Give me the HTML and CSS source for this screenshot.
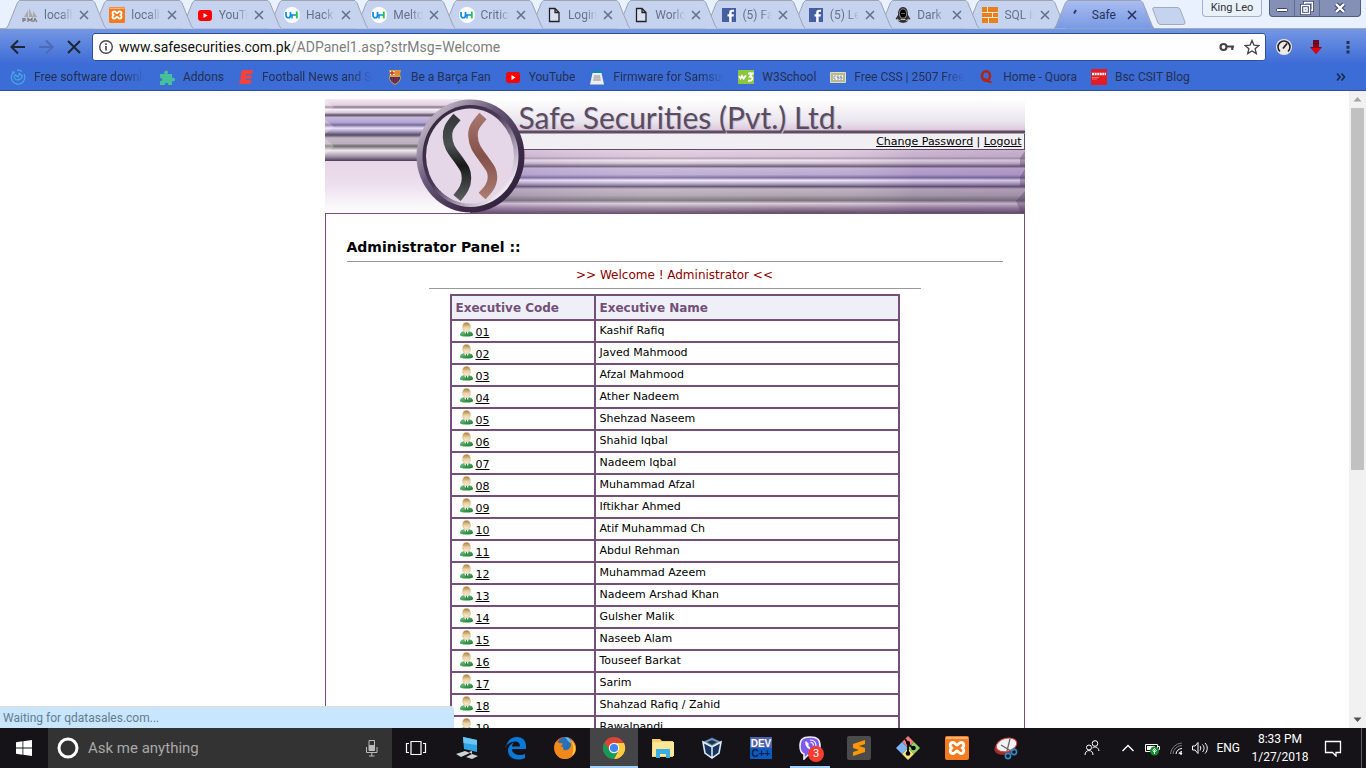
FILE: index.html
```html
<!DOCTYPE html>
<html lang="en">
<head>
<meta charset="utf-8">
<title>Safe Securities (Pvt.) Ltd.</title>
<link rel="stylesheet" href="styles.css">
</head>
<body>
<svg class="defs" aria-hidden="true">
  <defs>
    <linearGradient id="gTab" x1="0" y1="0" x2="0" y2="1"><stop offset="0" stop-color="#a9bdf0"/><stop offset="1" stop-color="#7899e3"/></linearGradient>
    <linearGradient id="gHair" x1="0" y1="0" x2="0" y2="1"><stop offset="0" stop-color="#a57b3c"/><stop offset=".5" stop-color="#e8cfa0"/><stop offset="1" stop-color="#fbeed6"/></linearGradient>
    <linearGradient id="gCoat" x1="0" y1="0" x2="1" y2="1"><stop offset="0" stop-color="#7cc487"/><stop offset="1" stop-color="#117a2c"/></linearGradient>
  </defs>
  <symbol id="shape" viewBox="0 0 100 29" preserveAspectRatio="none"><path d="M0 28.5 2 26 11.500 2.500 13.500.5H86.500L88.500 2.500 98 26 100 28.500" vector-effect="non-scaling-stroke"/></symbol>
  <symbol id="close" viewBox="0 0 10 10"><path d="M1 1 9 9M9 1 1 9" fill="none" stroke="currentColor" stroke-width="1.600"/></symbol>
  <symbol id="yt" viewBox="0 0 16 16"><rect x="1" y="3" width="14" height="11" rx="3" fill="#f00"/><path d="M6.500 6v5l4-2.500z" fill="#fff"/></symbol>
  <symbol id="uh" viewBox="0 0 16 16"><circle cx="8" cy="8" r="8" fill="#fff"/><path d="M2 5v3.500a2 2 0 0 0 4.500 0V5" fill="none" stroke="#0a8ae6" stroke-width="1.700"/><path d="M8 7.500V11.500M6.500 8h6" fill="none" stroke="#0a8ae6" stroke-width="1.500"/><path d="M12.800 4.500V11.500" stroke="#1ecb3a" stroke-width="1.800"/></symbol>
  <symbol id="doc" viewBox="0 0 16 16"><path d="M3.500 1.500h5.500l4 4v9h-9.500zM9 1.500v4h4" fill="#f4f6fb" fill-opacity=".4" stroke="#222" stroke-width="1.300"/></symbol>
  <symbol id="fb" viewBox="0 0 16 16"><rect x="1" y="1" width="14" height="14" fill="#4460a0"/><path d="M10.600 15V9.500h2.200V7.300h-2.200V6c0-.8.300-1.200 1.200-1.200h1.200V2.700h-2C9 2.700 8.200 4 8.200 5.700v1.600H6.500v2.200h1.700V15z" fill="#fff"/></symbol>
  <symbol id="xampp" viewBox="0 0 24 24"><rect width="24" height="24" rx="2" fill="#f47b20"/><path d="M1 1h22v2H1z" fill="#fbb377"/><path d="M8 6.500C4.500 6.500 4.500 11 7 12 4.500 13 4.500 17.500 8 17.500c2 0 2.500-2.500 4-2.500s2 2.500 4 2.500c3.500 0 3.500-4.500 1-5.500 2.500-1 2.500-5.500-1-5.500-2 0-2.500 2.500-4 2.500s-2-2.500-4-2.500z" fill="none" stroke="#fff" stroke-width="2.800" stroke-linejoin="round"/></symbol>
  <symbol id="user" viewBox="0 0 15 16"><path d="M1 12.500C1.500 9.500 4 9 7.500 9s6 .8 6.500 3.500c.2 1.500-1.500 2-6.500 2s-6.700-.5-6.500-2z" fill="url(#gCoat)"/><path d="M5 9.500 7.500 13 10 9.500 7.500 8.500z" fill="#fff"/><path d="m7 10-.7 3.500h2L8 10z" fill="#2a8c3e"/><ellipse cx="7.500" cy="5" rx="3.800" ry="4.400" fill="url(#gHair)" stroke="#c9a468" stroke-width=".5"/></symbol>
</svg>

<header class="browser">
  <div class="strip">
    <nav class="tabs" aria-label="Tabs">
      <div class="tab" style="--i:1"><svg class="bg"><use href="#shape"/></svg><svg class="ic" viewBox="0 0 16 16"><path d="M2 10 6 3v7zM7 10V1l4 9zM11 10V4l4 6z" fill="#a9a9a9"/><path d="M1 15v-3.500h2v2H1M6 15v-3.500l2 2 2-2V15M11.500 15l1.500-3.500 2 3.500" fill="none" stroke="#777" stroke-width="1.200"/></svg><span class="title">localhost</span><button aria-label="Close tab"><svg><use href="#close"/></svg></button></div>
      <div class="tab" style="--i:2"><svg class="bg"><use href="#shape"/></svg><svg class="ic"><use href="#xampp"/></svg><span class="title">localhost</span><button aria-label="Close tab"><svg><use href="#close"/></svg></button></div>
      <div class="tab" style="--i:3"><svg class="bg"><use href="#shape"/></svg><svg class="ic"><use href="#yt"/></svg><span class="title">YouTube</span><button aria-label="Close tab"><svg><use href="#close"/></svg></button></div>
      <div class="tab" style="--i:4"><svg class="bg"><use href="#shape"/></svg><svg class="ic"><use href="#uh"/></svg><span class="title">Hack</span><button aria-label="Close tab"><svg><use href="#close"/></svg></button></div>
      <div class="tab" style="--i:5"><svg class="bg"><use href="#shape"/></svg><svg class="ic"><use href="#uh"/></svg><span class="title">Meltdown</span><button aria-label="Close tab"><svg><use href="#close"/></svg></button></div>
      <div class="tab" style="--i:6"><svg class="bg"><use href="#shape"/></svg><svg class="ic"><use href="#uh"/></svg><span class="title">Critical</span><button aria-label="Close tab"><svg><use href="#close"/></svg></button></div>
      <div class="tab" style="--i:7"><svg class="bg"><use href="#shape"/></svg><svg class="ic"><use href="#doc"/></svg><span class="title">Login</span><button aria-label="Close tab"><svg><use href="#close"/></svg></button></div>
      <div class="tab" style="--i:8"><svg class="bg"><use href="#shape"/></svg><svg class="ic"><use href="#doc"/></svg><span class="title">World</span><button aria-label="Close tab"><svg><use href="#close"/></svg></button></div>
      <div class="tab" style="--i:9"><svg class="bg"><use href="#shape"/></svg><svg class="ic"><use href="#fb"/></svg><span class="title">(5) Facebook</span><button aria-label="Close tab"><svg><use href="#close"/></svg></button></div>
      <div class="tab" style="--i:10"><svg class="bg"><use href="#shape"/></svg><svg class="ic"><use href="#fb"/></svg><span class="title">(5) Leo</span><button aria-label="Close tab"><svg><use href="#close"/></svg></button></div>
      <div class="tab" style="--i:11"><svg class="bg"><use href="#shape"/></svg><svg class="ic" viewBox="0 0 16 16"><path d="M8 0C4 0 3 4 3 8l-2.500 4L3 13l1 2 4 1 4-1 1-2 2.500-1L13 8c0-4-1-8-5-8z" fill="#333"/><path d="M4.500 8C4 4 6 2 8 2s4 2 3.500 6L10 11H6z" fill="#000" stroke="#aaa" stroke-width=".8"/><path d="M5.500 12.500h5M6.500 6.500h1M8.500 6.500h1M2 12l3 2M14 12l-3 2" stroke="#bbb" stroke-width="1"/></svg><span class="title">Dark</span><button aria-label="Close tab"><svg><use href="#close"/></svg></button></div>
      <div class="tab" style="--i:12"><svg class="bg"><use href="#shape"/></svg><svg class="ic" viewBox="0 0 16 16"><path d="M0 0h16v16H0z" fill="#e67f1c"/><path d="M0 5.500h16M0 10.500h16M5.500 0v5.500M10.500 5.500v5M6.500 10.500V16" stroke="#f8e6cf" stroke-width="1"/></svg><span class="title">SQL in</span><button aria-label="Close tab"><svg><use href="#close"/></svg></button></div>
      <div class="tab active" style="--i:0"><svg class="bg"><use href="#shape"/></svg><svg class="ic" viewBox="0 0 16 16"><path d="M4 6.500 6 3" stroke="#233a75" stroke-width="2"/></svg><span class="title">Safe</span><button aria-label="Close tab"><svg><use href="#close"/></svg></button></div>
    </nav>
    <button class="newtab" aria-label="New tab"><svg viewBox="0 0 34 18"><path d="M2 .5H25Q27 .5 28 2L33 15Q33.500 17.500 31 17.500H9Q7 17.500 6 16L1 3Q0 .5 2 .5z" fill="#c6d3ef" stroke="#a3a9b8"/></svg></button>
    <div class="winctl">
      <button class="profile">King Leo</button>
      <div class="wbtns">
        <button aria-label="Minimize"><svg viewBox="0 0 16 14"><rect x="2.500" y="7.500" width="11" height="3" rx="1" fill="#fff" stroke="#3a4468"/></svg></button>
        <button aria-label="Restore"><svg viewBox="0 0 16 14"><path d="M5.500 1.500h8v8h-8z" fill="none" stroke="#3a4468" stroke-width="3"/><path d="M5.500 1.500h8v8h-8z" fill="#8490b5" stroke="#fff" stroke-width="1.300"/><path d="M2.500 4.500h8v8h-8z" fill="#8490b5" stroke="#3a4468" stroke-width="3"/><path d="M2.500 4.500h8v8h-8zM5 7h3v3H5z" fill="none" stroke="#fff" stroke-width="1.300"/></svg></button>
        <button class="wide" aria-label="Close"><svg viewBox="0 0 16 14"><path d="m4 3 8 8M12 3l-8 8" stroke="#3a4468" stroke-width="4.500"/><path d="m4 3 8 8M12 3l-8 8" stroke="#fff" stroke-width="2.400"/></svg></button>
      </div>
    </div>
  </div>

  <div class="toolbar">
    <div class="history">
      <button aria-label="Back"><svg viewBox="0 0 16 16"><path d="M15 8H2M8 1.500 1.500 8 8 14.500" fill="none" stroke="#1e2536" stroke-width="2"/></svg></button>
      <button aria-label="Forward"><svg viewBox="0 0 16 16"><path d="M1 8h13M8 1.500 14.500 8 8 14.500" fill="none" stroke="#4c6ab8" stroke-width="2"/></svg></button>
      <button aria-label="Stop"><svg viewBox="0 0 16 16"><path d="m2 2 12 12M14 2 2 14" stroke="#1e2536" stroke-width="2"/></svg></button>
    </div>
    <label class="omnibox">
      <svg viewBox="0 0 16 16"><circle cx="8" cy="8" r="6.300" fill="none" stroke="#4a4a4a" stroke-width="1.400"/><path d="M8 7v4.500M8 4.200v1.700" stroke="#4a4a4a" stroke-width="1.700"/></svg>
      <input class="host" type="text" aria-label="Address" value="www.safesecurities.com.pk"><span class="path">/ADPanel1.asp?strMsg=Welcome</span>
      <svg viewBox="0 0 16 16"><circle cx="4.500" cy="8" r="3" fill="none" stroke="#444" stroke-width="2.200"/><path d="M7.500 7.500H15M13.300 7.500V11" stroke="#444" stroke-width="2.200" fill="none"/></svg>
      <svg class="star" viewBox="0 0 16 16"><path d="m8 1.500 1.900 4.600 5 .4-3.800 3.200 1.200 4.900L8 12l-4.300 2.600 1.200-4.900L1.100 6.500l5-.4z" fill="none" stroke="#444" stroke-width="1.300"/></svg>
    </label>
    <div class="exts">
      <button aria-label="Speed"><svg viewBox="0 0 16 16"><circle cx="8" cy="8" r="8" fill="#eceae8"/><path d="M4 12.500A6 6 0 1 1 12 12.500" fill="none" stroke="#222" stroke-width="1.600"/><path d="m7 9.500 4-5" stroke="#222" stroke-width="1.800"/></svg></button>
      <button aria-label="Download"><svg viewBox="0 0 16 16"><path d="M5 1h6v7h3l-6 7-6-7h3z" fill="#8d0414"/><path d="M3 9h10l-5 6z" fill="#e00010"/><path d="M5 2h6M5 4.500h6" stroke="#3c1030"/></svg></button>
      <button aria-label="Menu"><svg viewBox="0 0 16 16"><path d="M6.500 2h3v3h-3zM6.500 6.800h3v3h-3zM6.500 11.600h3v3h-3z" fill="#26304e"/></svg></button>
    </div>
  </div>

  <nav class="bookmarks" aria-label="Bookmarks">
    <a href="#"><svg viewBox="0 0 16 16"><path d="M4.500 2.500A6.800 6.800 0 1 0 14 5M7 1.200a7 7 0 0 1 5 1.300M4 7c.5 5 6 5.500 8.500 0l-3-2.500L8 8 5.500 6zM2 3h2v2" fill="none" stroke="#4aa7e4" stroke-width="1.200"/></svg><span>Free software downloads</span></a>
    <a href="#"><svg viewBox="0 0 16 16"><path d="M1 5h4.500C4 1.500 9 0 9 3c0 1-.5 1.300-.5 2H13v4c1-.5 3-.5 3 1.500S14 12.500 13 12v4H9c1-3-3.500-3-3 0H1v-4c3 .5 3-3.500 0-3z" fill="#45c09b"/></svg><span>Addons</span></a>
    <a href="#"><svg viewBox="0 0 16 16"><path d="M4 1h11l-1 4H3zM3 4h5v8H2.500zM3 6.300h11l-.7 3.400H2.300zM2 11h11.500l-1 4H1z" fill="#f0433c"/></svg><span>Football News and Scores</span></a>
    <a href="#"><svg viewBox="0 0 16 16"><path d="M2 1h12l-1 4 1 4c-1 4-3 5-6 7-3-2-5-3-6-7l1-4z" fill="#d9a32c"/><path d="M3 2h4.500v4H3z" fill="#fff"/><path d="M3 4h4.500M5 2v4" stroke="#d22" stroke-width="1.400"/><path d="M8.500 2H13v4H8.500z" fill="#e8843a"/><path d="M3 8h10v2l-2 3-3 2-3-2-2-3z" fill="#233a86"/><path d="M5.500 8v5M8 8v6M10.500 8v5" stroke="#a8203c" stroke-width="1.300"/></svg><span>Be a Barça Fan</span></a>
    <a href="#"><svg><use href="#yt"/></svg><span>YouTube</span></a>
    <a href="#"><svg viewBox="0 0 16 16"><path d="M0 3c3-3.500 13-3.500 16 0l-2.500 1.500h-11z" fill="#1b7fc4"/><path d="M3.500 4h9L15 15.500H1z" fill="#eee"/><path d="M5 6h6l1 6H4z" fill="#bcbcbc"/></svg><span>Firmware for Samsung</span></a>
    <a href="#"><svg viewBox="0 0 16 16"><path d="M0 1h16v14H0z" fill="#8cc63f"/><path d="m1 7 1.500 2.500L4 7l1.500 2.500L8 6.500M10 4.500h4.500L12 7.500c4 0 3 5.500-2 4" fill="none" stroke="#fff" stroke-width="1.900"/></svg><span>W3School</span></a>
    <a href="#"><svg viewBox="0 0 16 16"><path d="M.5 3.500h15v10H.5z" fill="#b9b98c" stroke="#dcdcc4"/><path d="M3 6h10v5H3z" fill="#f5f5ec"/><path d="M6 7H4v3h2M9 7H7.300v1.500H9V10H7M12 7h-1.700v1.500H12V10h-2" fill="none" stroke="#7a86a8" stroke-width=".8"/></svg><span>Free CSS | 2507 Free Website</span></a>
    <a href="#"><svg viewBox="0 0 16 16"><ellipse cx="7" cy="7" rx="4" ry="4.800" fill="none" stroke="#b02519" stroke-width="2.600"/><path d="M5 10c3-1 3 4 7.500 3" fill="none" stroke="#b02519" stroke-width="2"/></svg><span>Home - Quora</span></a>
    <a href="#"><svg viewBox="0 0 16 16"><path d="M0 0h16v16H0z" fill="#e31b23"/><path d="M1 5h14" stroke="#fff" stroke-width="2.400" stroke-dasharray="2 .6"/><path d="M1 8.500h7M1 10h5" stroke="#f29094" stroke-width=".7"/></svg><span>Bsc CSIT Blog</span></a>
    <button class="more" aria-label="More bookmarks"><svg viewBox="0 0 10 10"><path d="m1 1.500 3 3.500-3 3.500M5.500 1.500l3 3.500-3 3.500" fill="none" stroke="#1c2848" stroke-width="1.600"/></svg></button>
  </nav>
</header>

<div class="viewport">
  <main class="page">
    <div class="banner">
      <svg class="art" viewBox="0 0 700 114" preserveAspectRatio="none" aria-hidden="true">
        <defs>
          <linearGradient id="left" x1="0" y1="0" x2="0" y2="1">
            <stop offset="0" stop-color="#f3ebf3"/><stop offset=".1" stop-color="#e4cfe2"/><stop offset=".13" stop-color="#87798a"/><stop offset=".17" stop-color="#f6f0f6"/><stop offset=".22" stop-color="#d8c9dc"/><stop offset=".26" stop-color="#5e5264"/><stop offset=".3" stop-color="#c9b9dc"/><stop offset=".38" stop-color="#b3a3d2"/><stop offset=".42" stop-color="#75699a"/><stop offset=".47" stop-color="#eae4f6"/><stop offset=".53" stop-color="#a194c0"/><stop offset=".58" stop-color="#564a5e"/><stop offset=".63" stop-color="#c4b9c8"/><stop offset=".72" stop-color="#b9b1bb"/><stop offset=".76" stop-color="#6b6a6b"/><stop offset=".83" stop-color="#efe8ef"/><stop offset=".93" stop-color="#a090a6"/><stop offset="1" stop-color="#4a3c52"/>
          </linearGradient>
          <linearGradient id="right" x1="0" y1="0" x2="0" y2="1">
            <stop offset="0" stop-color="#e2cbdf"/><stop offset=".11" stop-color="#d4bfd4"/><stop offset=".13" stop-color="#a592a6"/><stop offset=".16" stop-color="#eee6f0"/><stop offset=".21" stop-color="#cdbdd0"/><stop offset=".26" stop-color="#66546c"/><stop offset=".29" stop-color="#c3b2d6"/><stop offset=".39" stop-color="#b7a6d0"/><stop offset=".44" stop-color="#75649c"/><stop offset=".48" stop-color="#f0ecf8"/><stop offset=".54" stop-color="#a698be"/><stop offset=".58" stop-color="#5b4a66"/><stop offset=".62" stop-color="#bdb0c0"/><stop offset=".72" stop-color="#aaa0ac"/><stop offset=".8" stop-color="#726a74"/><stop offset=".85" stop-color="#d8cad8"/><stop offset=".92" stop-color="#947e98"/><stop offset="1" stop-color="#594460"/>
          </linearGradient>
          <linearGradient id="sheen"><stop offset="0" stop-color="#8c6cb0" stop-opacity=".25"/><stop offset=".35" stop-color="#fff" stop-opacity=".12"/><stop offset=".6" stop-color="#fff" stop-opacity=".05"/><stop offset=".8" stop-color="#80609a" stop-opacity=".18"/><stop offset="1" stop-color="#80609a" stop-opacity=".25"/></linearGradient>
          <linearGradient id="head" x1="0" y1="0" x2="0" y2="1"><stop offset="0" stop-color="#fff"/><stop offset=".7" stop-color="#e9e5ee"/><stop offset="1" stop-color="#ddc6da"/></linearGradient>
          <linearGradient id="foot" x1="0" y1="0" x2="0" y2="1"><stop offset="0" stop-color="#e8d6e8"/><stop offset=".45" stop-color="#ecdfee"/><stop offset="1" stop-color="#fff"/></linearGradient>
          <linearGradient id="ring" x1="0" y1="0" x2="1" y2="1"><stop offset="0" stop-color="#8c8090"/><stop offset=".16" stop-color="#b9adbd"/><stop offset=".4" stop-color="#6a587a"/><stop offset=".7" stop-color="#3c2a48"/><stop offset="1" stop-color="#2c1c36"/></linearGradient>
          <linearGradient id="rim" x1="0" y1="0" x2="1" y2="1"><stop offset="0" stop-color="#2b2034"/><stop offset=".45" stop-color="#4a3a58"/><stop offset=".7" stop-color="#b4a8bc"/><stop offset=".85" stop-color="#f1ecf4"/><stop offset="1" stop-color="#5e4e6c"/></linearGradient>
          <linearGradient id="ink" x1="0" y1="0" x2="0" y2="1"><stop offset="0" stop-color="#343838"/><stop offset=".35" stop-color="#4a5050"/><stop offset=".6" stop-color="#181a1a"/><stop offset="1" stop-color="#555c5b"/></linearGradient>
          <linearGradient id="rust" x1="0" y1="0" x2="0" y2="1"><stop offset="0" stop-color="#a5766e"/><stop offset=".5" stop-color="#84504a"/><stop offset="1" stop-color="#a87a70"/></linearGradient>
        </defs>
        <path d="M0 62h200v52H0z" fill="url(#foot)"/>
        <path d="M0 0h145v62H0z" fill="url(#left)"/>
        <path d="M0 1 9 8 0 14M0 20l9 8-9 7M0 39l9 8-9 10" fill="#fff" opacity=".25"/>
        <path d="M145 0h555v32H145z" fill="url(#head)"/>
        <path d="M145 34h555v17H145z" fill="#f2eff4"/>
        <path d="M145 31.500h555v3H145z" fill="#5d4d63"/>
        <path d="M145 51h555v63H145z" fill="url(#right)"/>
        <path d="M145 51h555v63H145z" fill="url(#sheen)"/>
        <path d="M145 50h555v1H145z" fill="#5d4d63"/>
        <path d="m700 52-5 7v8h5M700 70l-5 8v9h5M700 92l-9 10 5 12h4" fill="#4e3a58" opacity=".35"/>
        <path d="M699.500 35v15" stroke="#5d4d63"/>
        <ellipse cx="145.500" cy="57" rx="54" ry="56.500" fill="url(#ring)"/>
        <ellipse cx="145.500" cy="57" rx="48" ry="51" fill="url(#rim)"/>
        <ellipse cx="145" cy="57" rx="44" ry="47.500" fill="#e6d7e8"/>
        <path d="M132 18C124 27 122 31 122.500 38 123 48 128 53 133 60 140 70 141.500 72 141.500 79 141.500 87 138 92 132 99" fill="none" stroke="url(#ink)" stroke-width="9.500"/>
        <path d="M158 17C150 26 147.500 30 148 37 148.500 47 153 52 158 59 165 69 167.500 71 167.500 78 167.500 86 163 91 157 97" fill="none" stroke="url(#rust)" stroke-width="9.500"/>
      </svg>
      <p class="brand">Safe Securities (Pvt.) Ltd.</p>
      <nav class="account"><a href="#">Change Password</a> | <a href="#">Logout</a></nav>
    </div>
    <section class="panel">
      <h1>Administrator Panel ::</h1>
      <hr>
      <p class="welcome">&gt;&gt; Welcome ! Administrator &lt;&lt;</p>
      <hr class="short">
      <table>
        <thead><tr><th scope="col" class="code">Executive Code</th><th scope="col">Executive Name</th></tr></thead>
        <tbody>
          <tr><td><div class="exec"><svg><use href="#user"/></svg><a href="#">01</a></div></td><td>Kashif Rafiq</td></tr>
          <tr><td><div class="exec"><svg><use href="#user"/></svg><a href="#">02</a></div></td><td>Javed Mahmood</td></tr>
          <tr><td><div class="exec"><svg><use href="#user"/></svg><a href="#">03</a></div></td><td>Afzal Mahmood</td></tr>
          <tr><td><div class="exec"><svg><use href="#user"/></svg><a href="#">04</a></div></td><td>Ather Nadeem</td></tr>
          <tr><td><div class="exec"><svg><use href="#user"/></svg><a href="#">05</a></div></td><td>Shehzad Naseem</td></tr>
          <tr><td><div class="exec"><svg><use href="#user"/></svg><a href="#">06</a></div></td><td>Shahid Iqbal</td></tr>
          <tr><td><div class="exec"><svg><use href="#user"/></svg><a href="#">07</a></div></td><td>Nadeem Iqbal</td></tr>
          <tr><td><div class="exec"><svg><use href="#user"/></svg><a href="#">08</a></div></td><td>Muhammad Afzal</td></tr>
          <tr><td><div class="exec"><svg><use href="#user"/></svg><a href="#">09</a></div></td><td>Iftikhar Ahmed</td></tr>
          <tr><td><div class="exec"><svg><use href="#user"/></svg><a href="#">10</a></div></td><td>Atif Muhammad Ch</td></tr>
          <tr><td><div class="exec"><svg><use href="#user"/></svg><a href="#">11</a></div></td><td>Abdul Rehman</td></tr>
          <tr><td><div class="exec"><svg><use href="#user"/></svg><a href="#">12</a></div></td><td>Muhammad Azeem</td></tr>
          <tr><td><div class="exec"><svg><use href="#user"/></svg><a href="#">13</a></div></td><td>Nadeem Arshad Khan</td></tr>
          <tr><td><div class="exec"><svg><use href="#user"/></svg><a href="#">14</a></div></td><td>Gulsher Malik</td></tr>
          <tr><td><div class="exec"><svg><use href="#user"/></svg><a href="#">15</a></div></td><td>Naseeb Alam</td></tr>
          <tr><td><div class="exec"><svg><use href="#user"/></svg><a href="#">16</a></div></td><td>Touseef Barkat</td></tr>
          <tr><td><div class="exec"><svg><use href="#user"/></svg><a href="#">17</a></div></td><td>Sarim</td></tr>
          <tr><td><div class="exec"><svg><use href="#user"/></svg><a href="#">18</a></div></td><td>Shahzad Rafiq / Zahid</td></tr>
          <tr><td><div class="exec"><svg><use href="#user"/></svg><a href="#">19</a></div></td><td>Rawalpandi</td></tr>
        </tbody>
      </table>
    </section>
  </main>
  <div class="scroll" aria-hidden="true">
    <svg viewBox="0 0 17 17"><path d="m4.500 10.500 4-4.500 4 4.500z" fill="#a3a3a3"/></svg>
    <div class="track"><div class="thumb" style="height:60%"></div></div>
    <svg viewBox="0 0 17 17"><path d="m4.500 6.500 4 4.500 4-4.500z" fill="#505050"/></svg>
  </div>
  <div class="status">Waiting for qdatasales.com...</div>
</div>

<footer class="taskbar">
  <button class="start" aria-label="Start"><svg viewBox="0 0 16 16"><path d="M0 2.200 6.500 1.300v6.200H0zM7.300 1.200 16 0v7.500H7.300zM0 8.400h6.500v6.300L0 13.800zM7.300 8.400H16V16l-8.700-1.200z" fill="#fff"/></svg></button>
  <label class="search">
    <svg class="ring" viewBox="0 0 22 22"><circle cx="11" cy="11" r="9" fill="none" stroke="#fff" stroke-width="3"/></svg>
    <input type="text" placeholder="Ask me anything" aria-label="Ask me anything">
    <svg class="mic" viewBox="0 0 16 18"><path d="M5 1.500h5.500v10H5z" fill="none" stroke="#bbb"/><path d="M5 6h5.500v5.500H5z" fill="#bbb"/><path d="M2.500 8v5.500h10.500V8M7.800 14v3M5 17h5.500" fill="none" stroke="#bbb"/></svg>
  </label>
  <nav class="apps" aria-label="Applications">
    <button class="views" aria-label="Task view"><svg viewBox="0 0 24 24"><path d="M7 5.500h10v13H7zM5 7.500H2.500v9H5M19 7.500h2.500v9H19" fill="none" stroke="#fff" stroke-width="1.200"/></svg></button>
    <button aria-label="Remote desktop"><svg viewBox="0 0 24 24"><path d="m8 1 14 3v12L9 13z" fill="#2fa3e6"/><path d="m8 1 14 3v5L8.500 7z" fill="#6ac6f5"/><path d="m1 18 9-3 5 2-9 4zM11 21l6-3 6 2-6 3zM14 16l3-1v3z" fill="#cdd3d8"/></svg></button>
    <button aria-label="Edge"><svg viewBox="0 0 24 24"><path d="M2 11C3 5 7 1 13 1c6 0 9 4 9 9v3H8c0 4 4 6 8 6 2 0 4-.5 5-1v4c-2 1-4 1.500-7 1.500-6 0-10-4-10-9 0-4 3-7 6-8-1 1-2 2.500-2 4h8c0-3-1.500-5-5-5-4 0-7 2-10 5.500z" fill="#0a78d7"/></svg></button>
    <button aria-label="Firefox"><svg viewBox="0 0 24 24"><circle cx="12" cy="12" r="11" fill="#ee6a16"/><circle cx="12.500" cy="9" r="8" fill="#2c6fb5"/><path d="M12 1c5 1 7 4 7 7l-3-2z" fill="#6cc0e8"/><path d="M2 7c2-2 3-1 4 0l4 .5-2 3c2 0 3 1 2 3 3 2 7 0 8-4 0-3-1-5 0-6 4 3 6 8 4 13-2 4-6 6.500-10 6.500C5 23 0 17 2 7z" fill="#f08a1b"/><path d="M18 4c5 5 6 12 1 16 2-5 2-10-1-16z" fill="#fdd24c"/></svg></button>
    <button class="on" aria-label="Chrome"><svg viewBox="0 0 24 24"><circle cx="12" cy="12" r="11" fill="#db4437"/><path d="M12 7H22A11 11 0 0 1 12 23L16.500 14.500z" fill="#ffcd40"/><path d="M2.500 6.500A11 11 0 0 0 12 23l4.500-8.500H7.500z" fill="#0f9d58"/><circle cx="12" cy="12" r="5.200" fill="#fff"/><circle cx="12" cy="12" r="4.100" fill="#4285f4"/></svg></button>
    <button aria-label="File Explorer"><svg viewBox="0 0 24 24"><path d="M1 3h8l2 2h11v16H1z" fill="#f5d069"/><path d="M2 6h21v14H1z" fill="#fde59a"/><path d="M5 13h14v9h-4v-4H9v4H5z" fill="#39aee0"/></svg></button>
    <button aria-label="VirtualBox"><svg viewBox="0 0 24 24"><path d="m12 1 10 5-2 12-8 5-8-5L2 6z" fill="#15355e"/><path d="m12 2 9 4-9 5-9-5z" fill="#7f9ab8"/><path d="m12 4 5 2-5 3-5-3z" fill="#1a3558"/><path d="M3 6l9 5 9-5-2 11-7 5-7-5zM12 11v11" fill="none" stroke="#e4ecf3" stroke-width="1.500"/></svg></button>
    <button aria-label="Dev-C++"><svg viewBox="0 0 24 24"><path d="M1 1h22v11H1z" fill="#5062ac"/><path d="M1 12h22v11H1z" fill="#0a5cc0"/><text x="12" y="11" class="dev" fill="#fff">DEV</text><text x="12" y="21" class="dev" fill="#0b1d4a">C++</text></svg></button>
    <button class="open" aria-label="Viber"><svg viewBox="0 0 24 24"><path d="M12 1C4 1 2 4 2 10c0 5 1 7 4 8v5l4-4c9 1 12-2 12-9 0-6-2-9-10-9z" fill="#7b5cf0" stroke="#f0ecff" stroke-width="1.600"/><path d="M8 5c-2 2 0 6 3 8s5 3 6 1l-2-2-2 1-3-4 1-1z" fill="#fff"/><path d="M12 4c4 0 6 2 6 6M12.500 6.500c2 0 3 1 3 3" fill="none" stroke="#fff" stroke-width="1.100"/></svg><span class="count">3</span></button>
    <button aria-label="Sublime Text"><svg viewBox="0 0 24 24"><rect width="24" height="24" rx="2" fill="#4b4b4b"/><path d="M18 4v4l-6 2 6 2v4L6 20v-4l6-2-6-2V8z" fill="#ff9800"/></svg></button>
    <button aria-label="Git"><svg viewBox="0 0 24 24"><path d="m12 0 6 6-6 6-6-6z" fill="#f47c7c"/><path d="m18 6 6 6-6 6-6-6z" fill="#8fd36a"/><path d="m6 6 6 6-6 6-6-6z" fill="#7db4f5"/><path d="m12 12 6 6-6 6-6-6z" fill="#f9e27a"/><path d="m9 3 3 4v10M12 8l5 4" fill="none" stroke="#161418" stroke-width="2"/><circle cx="12" cy="7" r="2"/><circle cx="12" cy="17.500" r="2.300"/><circle cx="17.500" cy="12" r="2.300"/></svg></button>
    <button aria-label="XAMPP"><svg><use href="#xampp"/></svg></button>
    <button aria-label="Snipping Tool"><svg viewBox="0 0 24 24"><ellipse cx="11" cy="11.500" rx="11" ry="7" transform="rotate(-15 11 11)" fill="#a32b2b"/><ellipse cx="12.500" cy="9" rx="10.500" ry="6.500" transform="rotate(-15 12 9)" fill="#f0f2f4" stroke="#d24a4a"/><path d="m16 3-3 12M7 9l10 6" stroke="#666" stroke-width="1.300"/><circle cx="14" cy="20" r="2.600" fill="none" stroke="#2c8cc8" stroke-width="1.600"/><circle cx="20" cy="16" r="2.600" fill="none" stroke="#2c8cc8" stroke-width="1.600"/></svg></button>
  </nav>
  <div class="tray">
    <button class="people" aria-label="People"><svg viewBox="0 0 16 16"><circle cx="5" cy="7.500" r="2.500"/><path d="M1 15c0-6 8-6 8 0"/><circle cx="11" cy="3.500" r="2.800"/><path d="M8.500 8c2-2 6-1 6.500 3"/></svg></button>
    <button aria-label="Show hidden icons"><svg viewBox="0 0 16 16"><path d="m2.500 11 5.500-5.500 5.500 5.500" stroke-width="1.400"/></svg></button>
    <button aria-label="Battery"><svg viewBox="0 0 16 16"><path d="M1.500 4.500h12v7h-12zM14 6.500h1.500v3H14"/><path d="M3 6h8v4H3z" fill="#fff" stroke="none"/><circle cx="10.500" cy="11" r="4.500" fill="#128a2e" stroke="none"/><path d="M10.500 14V10M8.800 10.500l1.700-2 1.700 2-1.700 1.700z"/></svg></button>
    <button aria-label="Network"><svg viewBox="0 0 16 16"><path d="M2.500 14A12 12 0 0 1 14 3M5 14a9 9 0 0 1 9-8.500" stroke="#777"/><path d="M8 14a6 6 0 0 1 6-5.500M11 14a3 3 0 0 1 3-2.500"/><circle cx="13" cy="13.500" r="1.200" fill="#fff" stroke="none"/></svg></button>
    <button aria-label="Volume"><svg viewBox="0 0 16 16"><path d="M.5 6h2.500l3-3.500v11L3 10H.5zM8 6c1 1 1 3 0 4.500M10.500 4.500c2 2 2 5.500 0 7.500M13 3c3 3 3 7.500 0 10.500"/></svg></button>
    <button class="lang">ENG</button>
    <button class="clock"><time datetime="2018-01-27T20:33">8:33 PM<br>1/27/2018</time></button>
    <button class="notes" aria-label="Notifications"><svg viewBox="0 0 18 18"><path d="M1.500 2.500h15v11H12v3.500L8.500 13.500h-7z" stroke-width="1.300"/></svg></button>
  </div>
  <button class="peek" aria-label="Show desktop"></button>
</footer>
</body>
</html>
```
FILE: styles.css
```css
:root {
  --ui: "Segoe UI", Roboto, "Noto Sans", sans-serif;
  --verdana: Verdana, "DejaVu Sans", sans-serif;
  --plum: #734f79;
}
* { box-sizing: border-box; }
body {
  margin: 0;
  height: 100vh;
  display: flex;
  flex-direction: column;
  overflow: hidden;
  font-family: var(--ui);
  font-size: 12px;
  background: #fff;
}
svg { display: block; flex: none; }
.defs { position: absolute; width: 0; height: 0; }
button { border: 0; padding: 0; margin: 0; background: none; font: inherit; color: inherit; flex: none; }

/* Browser frame */
.browser { background: #3c6cd6; border-bottom: 1px solid #2a4f9e; }
.strip {
  display: flex;
  height: 29px;
  padding: 0 5px 0 6px;
  background: #e9f0fe;
  border-bottom: 1px solid #a3a9b8;
}
.tabs { display: flex; flex: 0 1 1148px; min-width: 0; height: 29px; }
.tab {
  position: relative;
  z-index: calc(20 - var(--i));
  flex: 1 1 0;
  min-width: 0;
  margin-right: -13px;
  padding: 1px 17px 0 16px;
  display: flex;
  align-items: center;
  gap: 6px;
  color: #65708c;
}
.tab:last-child { margin-right: 0; }
.bg {
  position: absolute;
  inset: 0;
  z-index: -1;
  width: 100%;
  height: 100%;
  fill: #c6d3ef;
  stroke: #9da3b3;
}
.active { color: #26335c; }
.active .bg { fill: url(#gTab); }
.ic { width: 16px; height: 16px; }
.title {
  flex: 1;
  min-width: 0;
  overflow: hidden;
  white-space: nowrap;
  mask-image: linear-gradient(to right, #000 60%, transparent);
}
.active .title { mask-image: none; }
.tab button svg { width: 10px; height: 10px; }
.newtab { width: 34px; height: 18px; margin: 7px 0 0 -2px; }
.winctl { display: flex; gap: 7px; margin-left: auto; }
.profile {
  width: 60px;
  height: 17px;
  border: 1px solid #a9b0c2;
  border-top: 0;
  border-radius: 0 0 4px 4px;
  font-size: 11px;
  line-height: 16px;
  color: #333;
}
.wbtns {
  display: flex;
  height: 17px;
  background: #8490b5;
  border: 1px solid #4f5b82;
  border-top: 0;
  border-radius: 0 0 4px 4px;
}
.wbtns button { width: 25px; display: grid; place-items: center; border-right: 1px solid #5e6a90; }
.wbtns .wide { width: 40px; border: 0; }
.wbtns svg { width: 16px; height: 14px; }

.toolbar {
  display: flex;
  align-items: center;
  gap: 10px;
  height: 34px;
  padding: 2px 10px 0;
  background: linear-gradient(#7597e3, #3f6dd7);
}
.toolbar button svg { width: 16px; height: 16px; }
.history { display: flex; gap: 12px; }
.omnibox {
  flex: 1;
  min-width: 0;
  display: flex;
  align-items: center;
  height: 28px;
  padding: 0 5px;
  background: #fff;
  border: 1px solid #2c519e;
  border-radius: 3px;
  font-size: 14px;
}
.omnibox svg { width: 16px; height: 16px; }
.host {
  field-sizing: content;
  margin-left: 5px;
  border: 0;
  padding: 0;
  font: inherit;
  color: #111;
  outline: 0;
}
.path { flex: 1; color: #7d7d7d; white-space: nowrap; overflow: hidden; }
.omnibox .star { margin-left: 9px; }
.exts { display: flex; gap: 16px; }

.bookmarks {
  display: flex;
  align-items: center;
  gap: 14px;
  height: 27px;
  padding: 0 20px 0 10px;
}
.bookmarks a { display: flex; align-items: center; gap: 8px; color: #24304f; text-decoration: none; }
.bookmarks a svg { width: 16px; height: 16px; }
.bookmarks span { max-width: 111px; overflow: hidden; white-space: nowrap; }
.bookmarks a:nth-child(1) span,
.bookmarks a:nth-child(3) span,
.bookmarks a:nth-child(6) span,
.bookmarks a:nth-child(8) span { mask-image: linear-gradient(to right, #000 80%, transparent); }
.more { margin-left: auto; }
.more svg { width: 10px; height: 10px; }

/* Web page */
.viewport { position: relative; flex: 1; min-height: 0; display: flex; overflow: hidden; }
.page { flex: 1; padding-top: 8px; font-family: var(--verdana); font-size: 11px; color: #000; }
.banner { position: relative; width: 100%; max-width: 700px; margin: 0 auto; }
.art { width: 100%; height: 114px; }
.brand {
  position: absolute;
  left: 194px;
  top: 0;
  margin: 0;
  font: 30px/36px Lato, sans-serif;
  color: #5a4c60;
  text-shadow: 1px 1px 0 #cabfce;
  white-space: nowrap;
}
.account { position: absolute; right: 3px; top: 35px; line-height: 16px; }
.page a { color: #000; }
.panel {
  max-width: 700px;
  margin: 0 auto;
  padding: 24px 21px;
  border: 1px solid var(--plum);
}
h1 { margin: 0 0 5px; font-size: 14px; line-height: 18px; }
hr { margin: 0; border: 0; height: 1px; background: #999; }
.short { width: 75%; margin: 0 auto; }
.welcome { margin: 0; padding: 4px 0; font-size: 12px; line-height: 18px; text-align: center; color: #8b0000; }
table { width: 450px; max-width: 100%; margin: 5px auto 0; border-collapse: collapse; table-layout: fixed; }
th, td { border: 2px solid var(--plum); padding: 0 4px; text-align: left; height: 22px; line-height: 16px; }
th { height: 25px; font-size: 12px; color: var(--plum); background: #eff0f7; }
.code { width: 144px; }
.exec { display: flex; align-items: flex-end; gap: 2px; height: 20px; padding-left: 3px; }
.exec svg { width: 15px; height: 16px; align-self: flex-start; margin-top: 1px; }

.scroll { width: 17px; display: flex; flex-direction: column; background: #f1f1f1; }
.scroll > svg { width: 17px; height: 17px; }
.track { flex: 1; padding: 0 2px; }
.thumb { background: #c1c1c1; }
.status {
  position: absolute;
  left: 0;
  bottom: 0;
  width: 454px;
  height: 22px;
  padding-left: 3px;
  line-height: 22px;
  background: #c8e6ff;
  color: #667c8e;
  border-top: 1px solid #dcdcdc;
  border-radius: 0 4px 0 0;
}

/* Taskbar */
.taskbar { display: flex; height: 40px; background: #151317; color: #fff; }
.start { width: 48px; display: grid; place-items: center; }
.start svg { width: 16px; height: 16px; }
.search {
  flex: 0 1 344px;
  display: flex;
  align-items: center;
  gap: 9px;
  padding: 0 12px 0 9px;
  background: #333;
}
.search input { flex: 1; min-width: 0; border: 0; padding: 0; background: none; font: 15px var(--ui); color: #fff; }
.search input::placeholder { color: #a8a8a8; }
.ring { width: 22px; height: 22px; }
.mic { width: 16px; height: 18px; }
.apps { display: flex; gap: 1px; }
.apps button { position: relative; width: 48px; display: grid; place-items: center; border-bottom: 2px solid transparent; padding-top: 2px; }
.apps .views { margin-right: 2px; }
.apps svg { width: 24px; height: 24px; }
.apps .on { background: #454447; border-color: #9fd0fb; }
.apps .open { background: linear-gradient(#9fd0fb, #9fd0fb) center bottom / 40px 2px no-repeat border-box; }
.dev { font: bold 10px "Liberation Sans", sans-serif; text-anchor: middle; }
.count {
  position: absolute;
  right: 10px;
  bottom: 4px;
  width: 16px;
  border-radius: 8px;
  background: #fb3d30;
  font-size: 11px;
  line-height: 16px;
  text-align: center;
}
.tray { display: flex; align-items: center; gap: 8px; margin-left: auto; padding-right: 19px; }
.tray svg { width: 16px; height: 16px; fill: none; stroke: #fff; }
.people { margin-right: 12px; }
.clock { width: 64px; line-height: 18px; text-align: center; }
.notes { margin-left: 4px; }
.tray .notes svg { width: 18px; height: 18px; }
.peek { width: 5px; border-left: 1px solid #5c5b5e; }
```
